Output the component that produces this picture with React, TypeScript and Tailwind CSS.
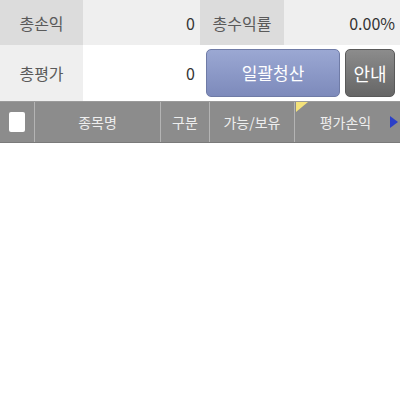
import React from 'react';

const font = { fontFamily: '"Noto Sans CJK KR", "Noto Sans", sans-serif' };

export default function App() {
  return (
    <div className="w-[400px] h-[400px] bg-white" style={font}>
      {/* Summary rows */}
      <div className="flex h-[45px]">
        <div className="w-[83px] bg-[#dcdcdc] flex items-center justify-center text-[16px] text-[#5a5a5a]">총손익</div>
        <div className="w-[117px] bg-[#efefef] flex items-center justify-end pr-[5px] text-[16px] text-[#333]">0</div>
        <div className="w-[84px] bg-[#dcdcdc] flex items-center justify-center text-[16px] text-[#5a5a5a]">총수익률</div>
        <div className="flex-1 bg-[#efefef] flex items-center justify-end pr-[5px] text-[16px] text-[#333]">0.00%</div>
      </div>
      <div className="flex h-[56px]">
        <div className="w-[83px] bg-[#efefef] flex items-center justify-center text-[16px] text-[#5a5a5a]">총평가</div>
        <div className="w-[117px] bg-white flex items-center justify-end pr-[5px] text-[16px] text-[#333]">0</div>
        <div className="flex-1 flex items-center gap-[5px] pl-[6px] pr-[5px]">
          <button className="w-[134px] h-[48px] rounded-[5px] border border-[#6f7ba6] bg-gradient-to-b from-[#9ba8d3] to-[#7d8abb] text-white text-[17px]">
            일괄청산
          </button>
          <button className="flex-1 h-[48px] rounded-[5px] border border-[#5a5a5a] bg-gradient-to-b from-[#8c8c8c] to-[#666] text-white text-[18px]">
            안내
          </button>
        </div>
      </div>

      {/* Table header */}
      <div className="flex h-[42px] bg-[#8c8c8c] border-t border-[#9a9a9a] border-b border-b-[#7a7a7a] text-[14px] text-[#eeeeee]">
        <div className="w-[35px] flex items-center justify-center border-r border-[#b4b4b4]">
          <div className="w-[16px] h-[20px] bg-white rounded-[2px]" />
        </div>
        <div className="w-[126px] flex items-center justify-center border-r border-[#b4b4b4]">종목명</div>
        <div className="w-[49px] flex items-center justify-center border-r border-[#b4b4b4]">구분</div>
        <div className="w-[85px] flex items-center justify-center border-r border-[#b4b4b4]">가능/보유</div>
        <div className="flex-1 relative flex items-center justify-center">
          <span className="pr-[4px]">평가손익</span>
          <svg className="absolute left-[1px] top-0" width="12" height="10" viewBox="0 0 12 10">
            <polygon points="0,0 12,0 0,10" fill="#f4e27a" />
          </svg>
          <svg className="absolute right-[2px] top-[14px]" width="8" height="12" viewBox="0 0 8 12">
            <polygon points="0,0 8,6 0,12" fill="#2b3fc8" />
          </svg>
        </div>
      </div>
    </div>
  );
}
